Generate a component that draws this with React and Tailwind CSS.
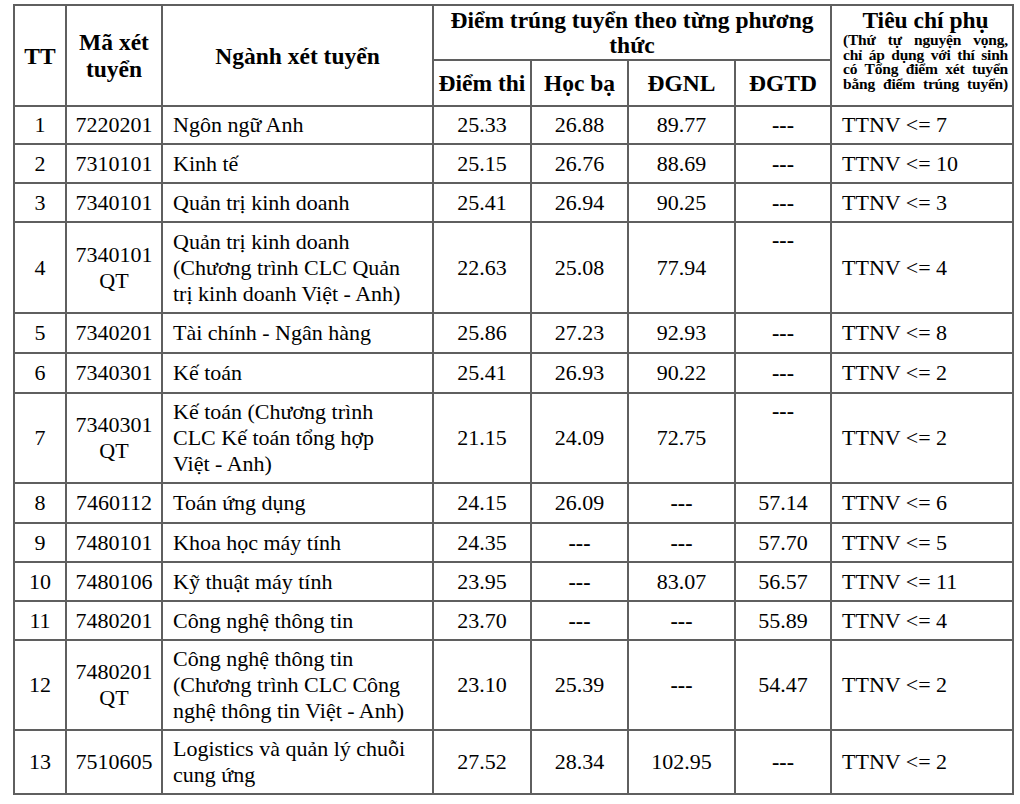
import React from "react"

const rows = [
  { tt: "1", ma: ["7220201"], nganh: ["Ngôn ngữ Anh"], thi: "25.33", hb: "26.88", dgnl: "89.77", dgtd: "---", tc: "TTNV <= 7", h: "h-[38px]" },
  { tt: "2", ma: ["7310101"], nganh: ["Kinh tế"], thi: "25.15", hb: "26.76", dgnl: "88.69", dgtd: "---", tc: "TTNV <= 10", h: "h-[39px]" },
  { tt: "3", ma: ["7340101"], nganh: ["Quản trị kinh doanh"], thi: "25.41", hb: "26.94", dgnl: "90.25", dgtd: "---", tc: "TTNV <= 3", h: "h-[39px]" },
  { tt: "4", ma: ["7340101", "QT"], nganh: ["Quản trị kinh doanh", "(Chương trình CLC Quản", "trị kinh doanh Việt - Anh)"], thi: "22.63", hb: "25.08", dgnl: "77.94", dgtd: "---", dgtdTop: true, tc: "TTNV <= 4", h: "h-[91px]" },
  { tt: "5", ma: ["7340201"], nganh: ["Tài chính - Ngân hàng"], thi: "25.86", hb: "27.23", dgnl: "92.93", dgtd: "---", tc: "TTNV <= 8", h: "h-[40px]" },
  { tt: "6", ma: ["7340301"], nganh: ["Kế toán"], thi: "25.41", hb: "26.93", dgnl: "90.22", dgtd: "---", tc: "TTNV <= 2", h: "h-[40px]" },
  { tt: "7", ma: ["7340301", "QT"], nganh: ["Kế toán (Chương trình", "CLC Kế toán tổng hợp", "Việt - Anh)"], thi: "21.15", hb: "24.09", dgnl: "72.75", dgtd: "---", dgtdTop: true, tc: "TTNV <= 2", h: "h-[90px]" },
  { tt: "8", ma: ["7460112"], nganh: ["Toán ứng dụng"], thi: "24.15", hb: "26.09", dgnl: "---", dgtd: "57.14", tc: "TTNV <= 6", h: "h-[40px]" },
  { tt: "9", ma: ["7480101"], nganh: ["Khoa học máy tính"], thi: "24.35", hb: "---", dgnl: "---", dgtd: "57.70", tc: "TTNV <= 5", h: "h-[39px]" },
  { tt: "10", ma: ["7480106"], nganh: ["Kỹ thuật máy tính"], thi: "23.95", hb: "---", dgnl: "83.07", dgtd: "56.57", tc: "TTNV <= 11", h: "h-[39px]" },
  { tt: "11", ma: ["7480201"], nganh: ["Công nghệ thông tin"], thi: "23.70", hb: "---", dgnl: "---", dgtd: "55.89", tc: "TTNV <= 4", h: "h-[39px]" },
  { tt: "12", ma: ["7480201", "QT"], nganh: ["Công nghệ thông tin", "(Chương trình CLC Công", "nghệ thông tin Việt - Anh)"], thi: "23.10", hb: "25.39", dgnl: "---", dgtd: "54.47", tc: "TTNV <= 2", h: "h-[90px]" },
  { tt: "13", ma: ["7510605"], nganh: ["Logistics và quản lý chuỗi", "cung ứng"], thi: "27.52", hb: "28.34", dgnl: "102.95", dgtd: "---", tc: "TTNV <= 2", h: "h-[64px]" },
]

const cell = "border-2 border-[#5f5f5f] align-middle"

const phuLines = [
  "(Thứ tự nguyện vọng,",
  "chỉ áp dụng với thí sinh",
  "có Tổng điểm xét tuyển",
  "bằng điểm trúng tuyển)",
]

function Val({ v }) {
  if (v === "---") return <span className="font-bold">---</span>
  return <span>{v}</span>
}

export default function App() {
  return (
    <div className="bg-white w-[1020px] h-[804px] pt-[4px] pl-[13px] font-['Liberation_Serif','Times_New_Roman',serif] text-black">
      <table className="table-fixed border-collapse w-[999px] text-[22px] leading-[26px]">
        <colgroup>
          <col className="w-[52px]" />
          <col className="w-[96px]" />
          <col className="w-[271px]" />
          <col className="w-[98px]" />
          <col className="w-[97px]" />
          <col className="w-[107px]" />
          <col className="w-[96px]" />
          <col className="w-[182px]" />
        </colgroup>
        <thead className="font-bold text-[23.5px]">
          <tr className="h-[55px]">
            <th rowSpan={2} className={`${cell} text-center`}>TT</th>
            <th rowSpan={2} className={`${cell} text-center leading-[27px]`}>Mã xét<br />tuyển</th>
            <th rowSpan={2} className={`${cell} text-center`}>Ngành xét tuyển</th>
            <th colSpan={4} className={`${cell} text-center leading-[25px] px-1`}>Điểm trúng tuyển theo từng phương<br />thức</th>
            <th rowSpan={2} className={`${cell} align-top pt-[2px] pl-[11px] pr-[4px]`}>
              <div className="text-center leading-[24px]">Tiêu chí phụ</div>
              <div className="text-[15.5px] leading-[14.7px] pt-[1px] tracking-[-0.2px]">
                {phuLines.map((l, i) => (
                  <div key={i} className="text-justify [text-align-last:justify] whitespace-nowrap">{l}</div>
                ))}
              </div>
            </th>
          </tr>
          <tr className="h-[46px]">
            <th className={`${cell} text-center whitespace-nowrap`}>Điểm thi</th>
            <th className={`${cell} text-center whitespace-nowrap`}>Học bạ</th>
            <th className={`${cell} text-center`}>ĐGNL</th>
            <th className={`${cell} text-center`}>ĐGTD</th>
          </tr>
        </thead>
        <tbody>
          {rows.map(r => (
            <tr key={r.tt} className={r.h}>
              <td className={`${cell} text-center`}>{r.tt}</td>
              <td className={`${cell} text-center`}>
                {r.ma.map((m, i) => <div key={i}>{m}</div>)}
              </td>
              <td className={`${cell} pl-[10px] whitespace-nowrap`}>
                {r.nganh.map((n, i) => <div key={i}>{n}</div>)}
              </td>
              <td className={`${cell} text-center`}><Val v={r.thi} /></td>
              <td className={`${cell} text-center`}><Val v={r.hb} /></td>
              <td className={`${cell} text-center`}><Val v={r.dgnl} /></td>
              <td className={`${cell} text-center ${r.dgtdTop ? "!align-top pt-[4px]" : ""}`}><Val v={r.dgtd} /></td>
              <td className={`${cell} pl-[10px] whitespace-nowrap`}>{r.tc}</td>
            </tr>
          ))}
        </tbody>
      </table>
    </div>
  )
}
